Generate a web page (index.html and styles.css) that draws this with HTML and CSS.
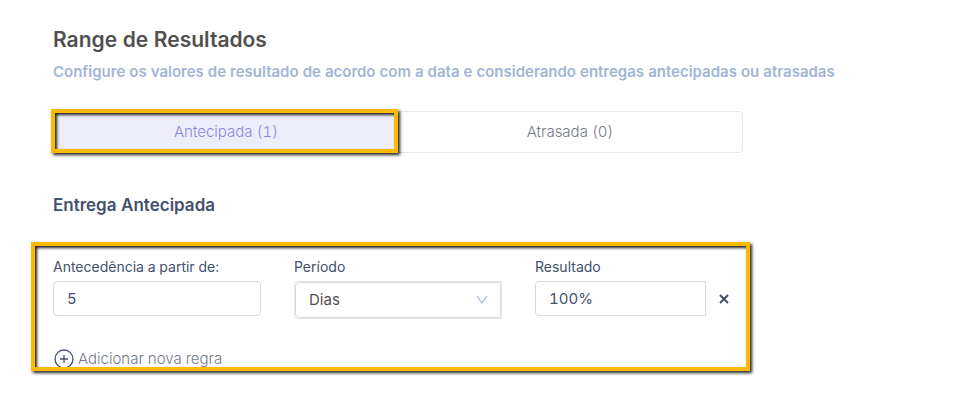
FILE: index.html
```html
<!DOCTYPE html>
<html lang="pt-BR">
<head>
<meta charset="utf-8">
<meta name="viewport" content="width=device-width, initial-scale=1">
<title>Range de Resultados</title>
<link rel="stylesheet" href="styles.css">
</head>
<body>
<main class="page">
  <h1 class="title">Range de Resultados</h1>
  <p class="subtitle">Configure os valores de resultado de acordo com a data e considerando entregas antecipadas ou atrasadas</p>

  <div class="tabs" role="tablist">
    <button class="tab tab-active highlight" type="button" role="tab" aria-selected="true">Antecipada (1)</button>
    <button class="tab" type="button" role="tab" aria-selected="false">Atrasada (0)</button>
  </div>

  <h2 class="section-title">Entrega Antecipada</h2>

  <form class="rules highlight">
    <div class="rule">
      <div class="field">
        <label for="lead">Antecedência a partir de:</label>
        <input class="control" id="lead" type="text" value="5">
      </div>
      <div class="field">
        <label for="period">Período</label>
        <div class="select-box">
          <select class="control" id="period"><option>Dias</option></select>
          <svg class="chevron" viewBox="0 0 12 10" aria-hidden="true"><path d="M1 1l5 7 5-7"/></svg>
        </div>
      </div>
      <div class="field">
        <label for="result">Resultado</label>
        <div class="result-row">
          <input class="control control-result" id="result" type="text" value="100%">
          <button class="remove" type="button" aria-label="Remover regra">
            <svg viewBox="0 0 10 10" aria-hidden="true"><path d="M1 1l8 8M9 1l-8 8"/></svg>
          </button>
        </div>
      </div>
    </div>
    <button class="add" type="button">
      <svg viewBox="0 0 20 20" aria-hidden="true"><circle cx="10" cy="10" r="9"/><path d="M10 6v8M6 10h8"/></svg>
      Adicionar nova regra
    </button>
  </form>
</main>
</body>
</html>
```
FILE: styles.css
```css
* {
  box-sizing: border-box;
}

body {
  margin: 0;
  background: #fff;
  color: #42506e;
  font-family: Inter, "Liberation Sans", sans-serif;
  font-size: 14px;
  line-height: 20px;
  font-variant-numeric: tabular-nums;
}

button,
input,
select {
  font: inherit;
  color: inherit;
  font-variant-numeric: inherit;
}

button {
  padding: 0;
  border: 0;
  background: none;
  cursor: pointer;
}

.page {
  padding: 24px 53px;
}

.title {
  margin: 0;
  color: #505050;
  font-size: 21px;
  font-weight: 600;
  line-height: 32px;
}

.subtitle {
  margin: 6px 0 0;
  color: #a3b5d6;
  font-size: 15px;
  font-weight: 600;
}

.tabs {
  display: grid;
  grid-template-columns: 1fr 1fr;
  max-width: 690px;
  height: 42px;
  margin-top: 29px;
  border: 1px solid #e6e6e6;
  border-radius: 4px;
}

.tab {
  color: #747a88;
  font-size: 15px;
  font-weight: 300;
}

.tab-active {
  background: #eeeefa;
  color: #8a86e6;
}

/* Yellow marker frame drawn over the marked element */
.highlight {
  position: relative;
}

.highlight::after {
  content: "";
  position: absolute;
  inset: 0;
  border: 4px solid #fbb900;
  box-shadow: 2px 2px 3px #222, inset 2px 2px 3px #222;
  pointer-events: none;
}

.tab-active::after {
  inset: -3px 0 -1px -3px;
}

.section-title {
  margin: 40px 0 0;
  font-size: 17px;
  font-weight: 600;
  line-height: 24px;
}

.rules {
  max-width: 719px;
  height: 129px;
  margin: 25px 0 0 -22px;
  padding: 15px 14px 0 22px;
}

.rule {
  display: grid;
  grid-template-columns: 208px 208px 1fr;
  gap: 33px;
}

.field label {
  display: block;
  margin-bottom: 4px;
}

.control {
  display: block;
  width: 100%;
  height: 35px;
  padding: 0 13px;
  border: 1px solid #d9d9d9;
  border-radius: 4px;
  background: #fff;
  font-size: 15px;
}

.select-box {
  position: relative;
  border: 1px solid #e6e6e6;
}

.select-box .control {
  height: 36px;
  appearance: none;
  color: #505050;
}

.chevron {
  position: absolute;
  top: 13px;
  right: 13px;
  width: 12px;
  height: 10px;
  fill: none;
  stroke: #a3b5d6;
  stroke-width: 1.2;
}

.result-row {
  display: flex;
  align-items: center;
  gap: 13px;
}

.control-result {
  flex: 1;
  min-width: 0;
  border-radius: 4px 0 0 4px;
}

.remove {
  display: flex;
  margin-right: 7px;
}

.remove svg {
  width: 10px;
  height: 10px;
  fill: none;
  stroke: #42506e;
  stroke-width: 2;
}

.add {
  display: flex;
  align-items: center;
  gap: 4px;
  margin: 30px 0 0 1px;
  color: #747a88;
  font-size: 15px;
  font-weight: 300;
}

.add svg {
  width: 20px;
  height: 20px;
  fill: none;
  stroke: #42506e;
  stroke-width: 1.3;
}
```
